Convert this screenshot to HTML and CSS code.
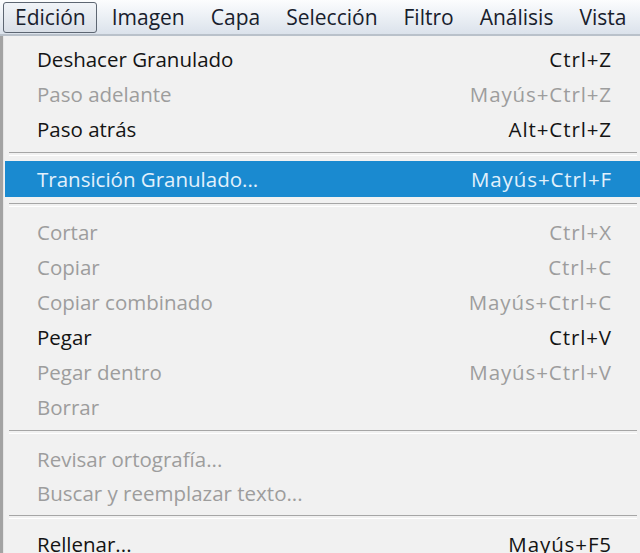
FILE: index.html
```html
<!DOCTYPE html>
<html lang="es">
<head>
	<meta charset="UTF-8">
	<title>Menú Edición</title>
	<link rel="stylesheet" href="styles.css">
</head>
<body>
	<div class="menubar">
		<span class="menubar-item active">Edición</span>
		<span class="menubar-item">Imagen</span>
		<span class="menubar-item">Capa</span>
		<span class="menubar-item">Selección</span>
		<span class="menubar-item">Filtro</span>
		<span class="menubar-item">Análisis</span>
		<span class="menubar-item">Vista</span>
	</div>
	<div class="menu">
		<div class="item"><span>Deshacer Granulado</span><span class="key">Ctrl+Z</span></div>
		<div class="item off"><span>Paso adelante</span><span class="key">Mayús+Ctrl+Z</span></div>
		<div class="item"><span>Paso atrás</span><span class="key">Alt+Ctrl+Z</span></div>
		<div class="sep sep-hl"></div>
		<div class="item hl"><span>Transición Granulado...</span><span class="key">Mayús+Ctrl+F</span></div>
		<div class="sep"></div>
		<div class="item off"><span>Cortar</span><span class="key">Ctrl+X</span></div>
		<div class="item off"><span>Copiar</span><span class="key">Ctrl+C</span></div>
		<div class="item off"><span>Copiar combinado</span><span class="key">Mayús+Ctrl+C</span></div>
		<div class="item"><span>Pegar</span><span class="key">Ctrl+V</span></div>
		<div class="item off"><span>Pegar dentro</span><span class="key">Mayús+Ctrl+V</span></div>
		<div class="item off"><span>Borrar</span><span></span></div>
		<div class="sep"></div>
		<div class="item off"><span>Revisar ortografía...</span><span></span></div>
		<div class="item off short"><span>Buscar y reemplazar texto...</span><span></span></div>
		<div class="sep"></div>
		<div class="item"><span>Rellenar...</span><span class="key">Mayús+F5</span></div>
	</div>
</body>
</html>
```

FILE: styles.css
```css
*{
	margin: 0;
	padding: 0;
	box-sizing: border-box;
}
body{
	background: #f0f0f0;
	font-family: "Open Sans", "Noto Sans", sans-serif;
	font-size: 20.5px;
	color: #141414;
	overflow: hidden;
}
/*barra de menús*/
.menubar{
	height: 36px;
	display: flex;
	align-items: flex-start;
	padding: 2px 0 0 3px;
	background: linear-gradient(#fcfdfe, #e8edf3 60%, #dbe2eb);
	border-bottom: 2px solid #b9c1ca;
	white-space: nowrap;
	font-size: 21px;
}
.menubar-item{
	height: 31px;
	line-height: 29px;
	padding: 0 10px 0 11px;
	margin-right: 3px;
	border: 1px solid transparent;
	color: #18202c;
}
.menubar-item.active{
	border-color: #5d6672;
	border-radius: 3px;
	background: linear-gradient(#f1f4f8, #d9dfe7);
}
/*menú desplegable*/
.menu{
	padding: 5px 0 0 0;
	border-left: 3px solid #a3a3a3;
	box-shadow: inset 1px 0 0 #e6e6e6;
	min-height: 517px;
	background: #f1f1f1;
}
.item{
	height: 35px;
	display: flex;
	justify-content: space-between;
	align-items: center;
	padding: 0 28px 0 32px;
	margin-left: 2px;
	white-space: nowrap;
}
.key{
	letter-spacing: 0.9px;
}
.item.off{
	color: #9d9d9d;
}
.item.short{
	height: 33px;
}
.item.hl{
	height: 36px;
	background: #1a8ad0;
	color: #e2f1fc;
}
.sep{
	height: 17px;
	padding: 6px 3px 9px 3px;
	margin-left: 3px;
}
.sep::after{
	content: "";
	display: block;
	height: 2px;
	border-top: 1px solid #a6a6a6;
	border-bottom: 1px solid #ffffff;
}
.sep-hl{
	height: 15px;
	padding-bottom: 7px;
}
```
